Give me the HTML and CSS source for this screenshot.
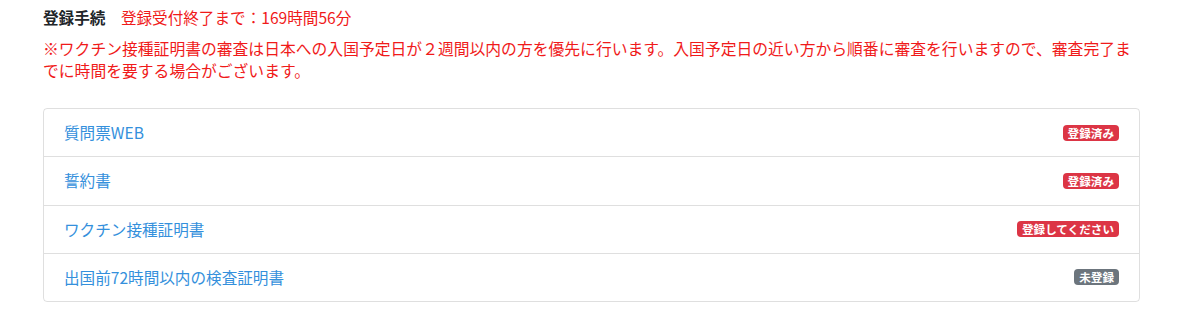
FILE: index.html
```html
<!DOCTYPE html>
<html lang="ja">

<head>
    <meta charset="UTF-8">
    <meta name="viewport" content="width=device-width, initial-scale=1">
    <title>登録手続</title>
    <link rel="stylesheet" href="styles.css">
</head>

<body>
    <div class="wrap">
        <div class="heading">
            <span class="heading-title">登録手続</span>
            <span class="heading-limit">登録受付終了まで：169時間56分</span>
        </div>

        <p class="notice">※ワクチン接種証明書の審査は日本への入国予定日が２週間以内の方を優先に行います。入国予定日の近い方から順番に審査を行いますので、審査完了までに時間を要する場合がございます。</p>

        <ul class="list-group">
            <li class="list-group-item">
                <a href="#">質問票WEB</a>
                <span class="badge badge-danger">登録済み</span>
            </li>
            <li class="list-group-item">
                <a href="#">誓約書</a>
                <span class="badge badge-danger">登録済み</span>
            </li>
            <li class="list-group-item">
                <a href="#">ワクチン接種証明書</a>
                <span class="badge badge-danger">登録してください</span>
            </li>
            <li class="list-group-item">
                <a href="#">出国前72時間以内の検査証明書</a>
                <span class="badge badge-secondary">未登録</span>
            </li>
        </ul>
    </div>
</body>

</html>
```

FILE: styles.css
```css
body {
    margin: 0;
    background-color: #fff;
    color: #212529;
    font-family: "Noto Sans CJK JP", "Noto Sans", sans-serif;
    font-size: 15.6px;
}

.wrap {
    padding: 6px 64px 0 43px;
}

/* title line */
.heading {
    line-height: 22px;
}

.heading-title {
    font-weight: bold;
    margin-right: 12px;
}

.heading-limit {
    color: #f01a1a;
}

.notice {
    margin: 10px 0 26px 0;
    color: #f01a1a;
    font-size: 15.8px;
    line-height: 22px;
}

/* list of documents */
.list-group {
    list-style: none;
    margin: 0;
    padding: 0;
    border: 1px solid rgba(0, 0, 0, 0.125);
    border-radius: 4px;
}

.list-group-item {
    display: flex;
    justify-content: space-between;
    align-items: center;
    padding: 12px 20px;
    line-height: 23.25px;
    border-top: 1px solid rgba(0, 0, 0, 0.125);
}

.list-group-item:first-child {
    border-top: none;
}

.list-group-item a {
    color: #3490dc;
    text-decoration: none;
}

.badge {
    display: inline-block;
    padding: 0 5px;
    font-size: 11.6px;
    font-weight: bold;
    line-height: 16px;
    color: #fff;
    border-radius: 4px;
}

.badge-danger {
    background-color: #dc3545;
}

.badge-secondary {
    background-color: #6c757d;
}
```
